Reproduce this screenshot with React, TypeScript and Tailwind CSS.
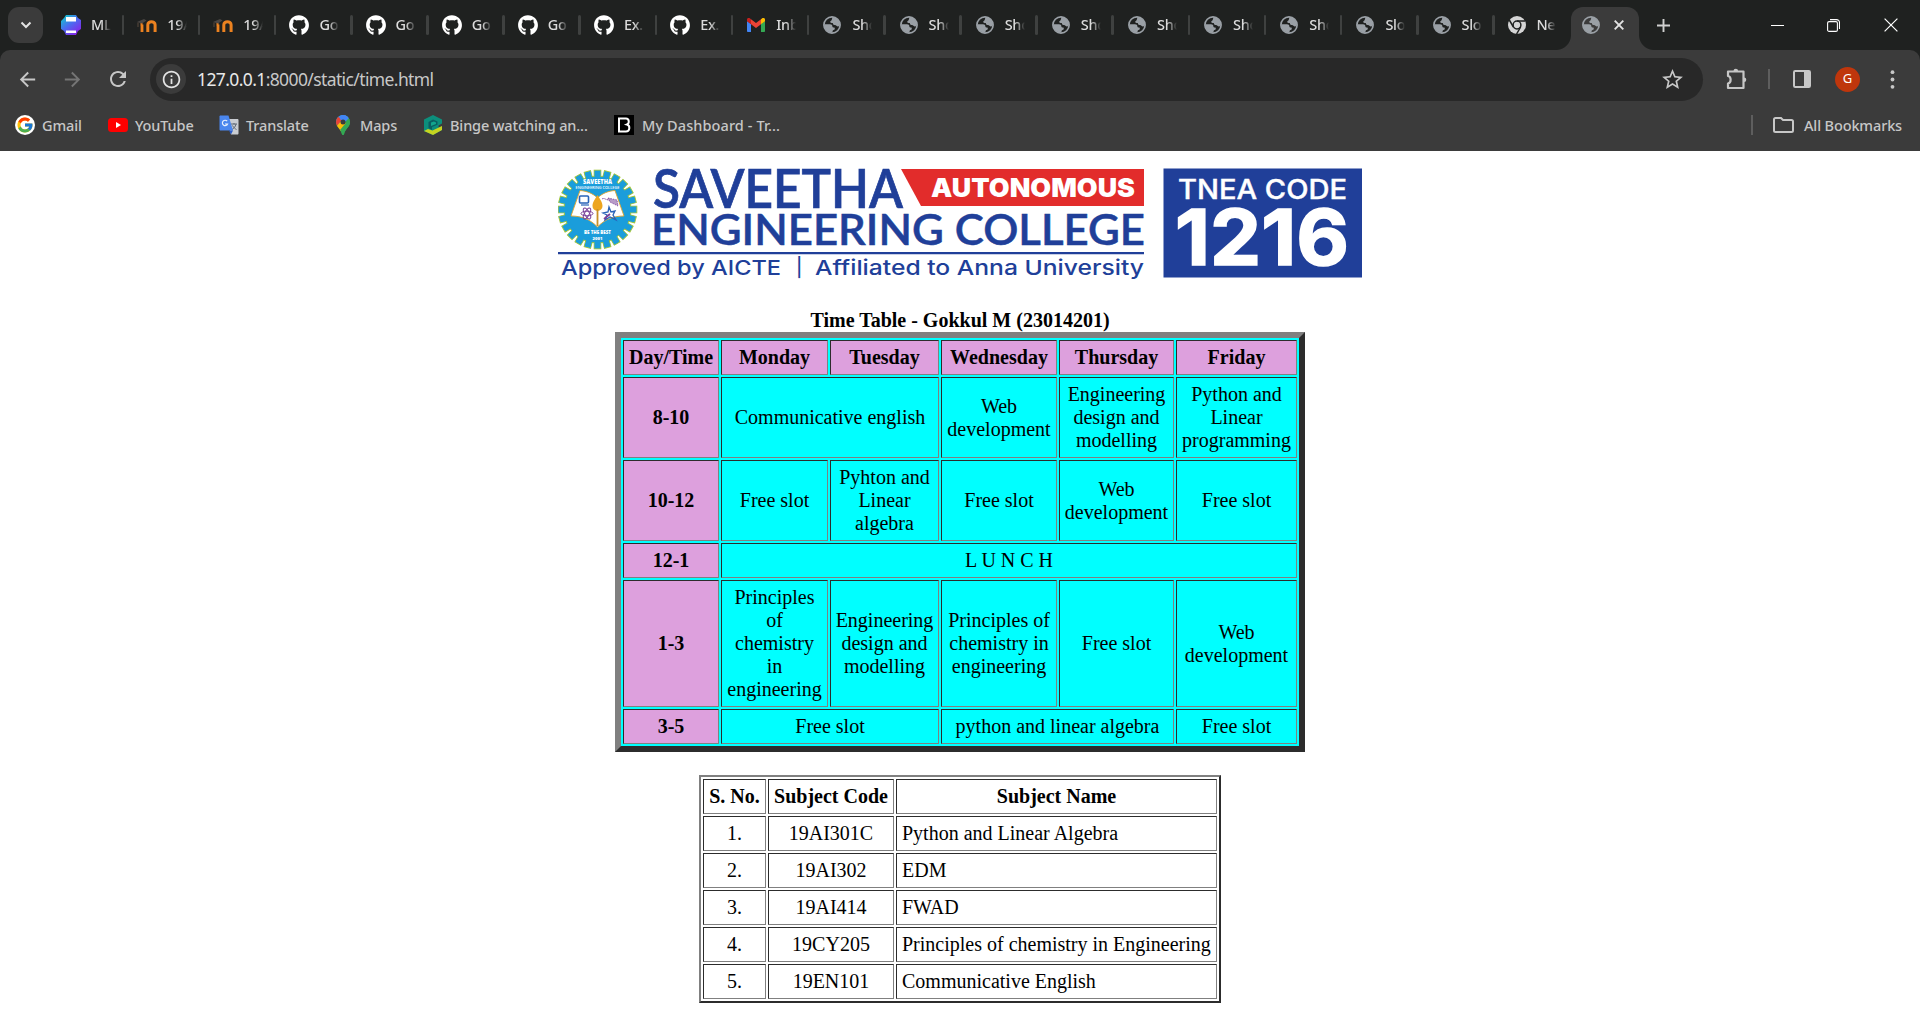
import React from "react";
import { FaGithub } from "react-icons/fa";
import { FcGoogle } from "react-icons/fc";
import { MdStarBorder, MdArrowBack, MdArrowForward, MdRefresh, MdInfoOutline } from "react-icons/md";

type IconKind = "ml" | "moodle" | "github" | "gmail" | "globe" | "chrome";

const tabs: { icon: IconKind; title: string }[] = [
  { icon: "ml", title: "ML" },
  { icon: "moodle", title: "19A" },
  { icon: "moodle", title: "19A" },
  { icon: "github", title: "Go" },
  { icon: "github", title: "Go" },
  { icon: "github", title: "Go" },
  { icon: "github", title: "Go" },
  { icon: "github", title: "Ex." },
  { icon: "github", title: "Ex." },
  { icon: "gmail", title: "Inb" },
  { icon: "globe", title: "Sho" },
  { icon: "globe", title: "Sho" },
  { icon: "globe", title: "Sho" },
  { icon: "globe", title: "Sho" },
  { icon: "globe", title: "Sho" },
  { icon: "globe", title: "Sho" },
  { icon: "globe", title: "Sho" },
  { icon: "globe", title: "Slo" },
  { icon: "globe", title: "Slo" },
];

function Globe() {
  return (
    <svg width="18" height="18" viewBox="0 0 18 18">
      <circle cx="9" cy="9" r="8.1" fill="none" stroke="#9aa0a6" strokeWidth="1.7" />
      <path d="M9.6 1C12 1 16.5 3.5 17 8.5c-.5 1.700-1.600 2.200-2.800 1.700-1.200-.6-1.400-1.400-2.800-1.300-1.300 0-1.500-.9-1.400-1.800-.9.2-2.600.1-2.800-1 0-1 1.200-1.300 1.500-2C9 3.300 9.200 2 9.600 1z" fill="#9aa0a6" />
      <path d="M1.200 8.300h5.800c1.500 0 2.400.8 2.400 2.200 0 .8.700 1.100 1.500 1.100.8 0 1.100.7.8 1.600-.4.8-1.700.8-2 1.600-.2.700-.2 1.300-.2 2C4.500 17 .8 13 1.200 8.300z" fill="#9aa0a6" />
    </svg>
  );
}

function TabIcon({ kind }: { kind: IconKind }) {
  switch (kind) {
    case "github":
      return <FaGithub size={20.5} color="#fff" />;
    case "globe":
      return <Globe />;
    case "gmail":
      return (
        <svg width="18" height="14" viewBox="0 0 18 14">
          <path d="M0 3v10.200c0 .5.400.8.800.8H4V6z" fill="#4285f4" />
          <path d="M18 3v10.200c0 .5-.4.8-.8.8H14V6z" fill="#34a853" />
          <path d="M14 1.200V6.200L18 3.200V1.600C18 .2 16.400-.6 15.200.300z" fill="#fbbc04" />
          <path d="M0 3.200l4 3V1.200L2.800.3C1.600-.6 0 .2 0 1.600z" fill="#c5221f" />
          <path d="M4 6.200v-5l5 3.800 5-3.800v5L9 10z" fill="#ea4335" />
        </svg>
      );
    case "chrome":
      return (
        <svg width="18" height="18" viewBox="0 0 18 18">
          <circle cx="9" cy="9" r="9" fill="#d5d5d5" />
          <circle cx="9" cy="9" r="3.900" fill="#d5d5d5" stroke="#1f2120" strokeWidth="1.500" />
          <path d="M9 4.900h8.200M5.400 11L1.300 4M12.600 11l-4 7" stroke="#1f2120" strokeWidth="1.500" fill="none" />
        </svg>
      );
    case "moodle":
      return (
        <svg width="20" height="13" viewBox="0 0 20 13">
          <path d="M5 13V5.500M5.500 5.500h-2" fill="none" stroke="#ec8220" strokeWidth="2.800" />
          <path d="M10.800 13V5.800c0-4.200 7.300-4.200 7.300 0V13" fill="none" stroke="#ec8220" strokeWidth="3" />
          <path d="M0 3L7 0l2.500 1.500L5 4.500z" fill="#4a4644" />
          <path d="M1 3.500v4.500" stroke="#5b4a3c" strokeWidth="1" />
        </svg>
      );
    case "ml":
      return (
        <svg width="20" height="20" viewBox="0 0 20 20">
          <defs>
            <linearGradient id="mlg" x1="0" y1="0" x2=".8" y2="1">
              <stop offset="0" stopColor="#08d6c4" />
              <stop offset=".5" stopColor="#4a6cf0" />
              <stop offset="1" stopColor="#8b1fe8" />
            </linearGradient>
          </defs>
          <path d="M5 0h10l2 3 3 2v9l-3 2-2 4H5l-2-4-3-2V6l3-3z" fill="url(#mlg)" />
          <path d="M5 2h10v4.500H5zM5 15.500h10V18H5z" fill="#fff" />
        </svg>
      );
  }
}

const titleClass =
  "w-[20px] overflow-hidden whitespace-nowrap text-[14.500px] tracking-[-0.3px] font-medium text-[#dcdcdc] [mask-image:linear-gradient(to_right,black_50%,transparent)]";

function Tab({ icon, title }: { icon: IconKind; title: string }) {
  return (
    <div className="flex h-[50px] w-[76.15px] shrink-0 items-center">
      <div className="ml-[13px] flex w-[20px] shrink-0 justify-center">
        <TabIcon kind={icon} />
      </div>
      <div className={`ml-[10px] ${titleClass}`}>{title}</div>
      <div className="ml-auto h-[20px] w-[2.500px] rounded-full bg-[#3f4140]" />
    </div>
  );
}

function TabStrip() {
  return (
    <div className="flex h-[50px] bg-[#1f2120]">
      <div className="mt-[7px] ml-[8px] flex h-[36px] w-[35px] items-center justify-center rounded-[11px] bg-[#3b3b3b]">
        <svg width="12" height="8" viewBox="0 0 12 8" fill="none" stroke="#e3e3e3" strokeWidth="2"><path d="M1.500 1.500L6 6l4.500-4.500" /></svg>
      </div>
      <div className="ml-[5px] flex">
        {tabs.map((t, i) => <Tab key={i} {...t} />)}
        <div className="flex h-[50px] w-[61.500px] items-center">
          <div className="ml-[12px] flex w-[20px] justify-center"><TabIcon kind="chrome" /></div>
          <div className={`ml-[10px] ${titleClass}`}>Ne</div>
        </div>
      </div>
      <div className="flex items-end">
        <div className="h-[15px] w-[15px] bg-[radial-gradient(circle_at_0_0,transparent_14.5px,#3b3b3b_15.5px)]" />
        <div className="flex h-[43px] w-[68px] items-center rounded-t-[12px] bg-[#3b3b3b] pb-[7px]">
          <div className="ml-[11px]"><Globe /></div>
          <svg className="ml-[14px]" width="10" height="10" viewBox="0 0 10 10" stroke="#e3e3e3" strokeWidth="1.900"><path d="M.7.7l8.600 8.600M9.300.7L.7 9.300" /></svg>
        </div>
        <div className="h-[15px] w-[15px] bg-[radial-gradient(circle_at_100%_0,transparent_14.5px,#3b3b3b_15.5px)]" />
      </div>
      <div className="flex h-[50px] flex-1 items-center">
        <svg className="ml-[3px]" width="13" height="13" viewBox="0 0 13 13" stroke="#d0d0d0" strokeWidth="1.900"><path d="M6.500 0v13M0 6.500h13" /></svg>
        <svg className="ml-auto" width="13" height="13" viewBox="0 0 13 13" stroke="#fff" strokeWidth="1"><path d="M0 6.500h13" /></svg>
        <svg className="ml-[43px]" width="13" height="13" viewBox="0 0 13 13" fill="none" stroke="#fff" strokeWidth="1.100"><rect x=".6" y="2.600" width="9.800" height="9.800" rx="1.500" /><path d="M3 .6h6.500a3 3 0 0 1 3 3V10" /></svg>
        <svg className="mr-[22px] ml-[44px]" width="14" height="14" viewBox="0 0 14 14" stroke="#fff" strokeWidth="1.200"><path d="M.6.6l12.800 12.800M13.400.6L.6 13.400" /></svg>
      </div>
    </div>
  );
}

function AddressRow() {
  return (
    <div className="flex h-[58px] items-center text-[#c7c7c7]">
      <MdArrowBack size={23} className="ml-[16px]" />
      <MdArrowForward size={23} className="ml-[22px] text-[#757575]" />
      <MdRefresh size={24} className="ml-[22px]" />
      <div className="ml-[20px] flex h-[43px] w-[1553px] items-center rounded-full bg-[#282828]">
        <div className="ml-[6px] flex h-[30px] w-[30px] items-center justify-center rounded-full bg-[#3b3b3b]">
          <MdInfoOutline size={21} color="#e3e3e3" />
        </div>
        <div className="ml-[11px] text-[17.500px] tracking-[-0.61px] whitespace-nowrap text-[#c7c7c7]">
          <span className="text-[#e8e8e8]">127.0.0.1</span>:8000/static/time.html
        </div>
        <MdStarBorder size={25} className="mr-[18px] ml-auto" />
      </div>
      <svg className="ml-[23px]" width="22" height="22" viewBox="0 0 22 22" fill="none" stroke="#c7c7c7" strokeWidth="2.200"><path d="M2 3.500h15.500V20H2v-4.500c3.500-.5 3.500-7 0-7.500z" strokeLinejoin="round" /><path d="M7.500 3a2.300 2.300 0 0 1 4.600 0zM18 9.500a2.300 2.300 0 0 1 0 4.600z" fill="#c7c7c7" stroke="none" /></svg>
      <div className="ml-[20px] h-[20px] w-[2px] bg-[#5e5e5e]" />
      <svg className="ml-[23px]" width="18" height="18" viewBox="0 0 18 18"><rect x="1" y="1" width="16" height="16" rx="1.200" fill="none" stroke="#c7c7c7" strokeWidth="2" /><path d="M11 1h6v16h-6z" fill="#c7c7c7" /></svg>
      <div className="ml-[24px] flex h-[25px] w-[25px] items-center justify-center rounded-full bg-[#bf360c] text-[13px] text-white">G</div>
      <svg className="ml-[30px]" width="5" height="19" viewBox="0 0 5 19" fill="#c7c7c7"><circle cx="2.500" cy="2.200" r="1.900" /><circle cx="2.500" cy="9.500" r="1.900" /><circle cx="2.500" cy="16.800" r="1.900" /></svg>
    </div>
  );
}

function BookmarksBar() {
  return (
    <div className="flex h-[34px] items-center text-[14.500px] font-medium tracking-[-0.13px] whitespace-nowrap text-[#c7c7c7]">
      <div className="ml-[15px] flex h-[20px] w-[20px] items-center justify-center rounded-full bg-white"><FcGoogle size={18} /></div>
      <div className="mt-[2px] ml-[7px] w-[66px]">Gmail</div>
      <svg width="20" height="14" viewBox="0 0 20 14"><rect width="20" height="14" rx="3.500" fill="#f00" /><path d="M8 4l5 3-5 3z" fill="#fff" /></svg>
      <div className="mt-[2px] ml-[7px] w-[84px]">YouTube</div>
      <svg width="20" height="20" viewBox="0 0 20 20">
        <path d="M8 4h10.500c.5 0 1 .5 1 1v13.500c0 .5-.5 1-1 1H12z" fill="#c9ccd1" />
        <path d="M12 9h6M15 8v1.500M17 9c-.5 3-2.500 4.500-4 5.500M13.500 10.500c1 2 2.500 3.200 4 4" stroke="#5f6875" strokeWidth="1" fill="none" />
        <path d="M1.500.5h8l4.500 15H1.500c-.5 0-1-.5-1-1v-13c0-.5.5-1 1-1z" fill="#4a86ee" />
        <path d="M10 15.500h4l-2 4z" fill="#2a5bc8" />
        <path d="M8.200 6.200A2.700 2.700 0 1 0 8.600 9H6" stroke="#e8f0fe" strokeWidth="1.200" fill="none" />
      </svg>
      <div className="mt-[2px] ml-[7px] w-[90px]">Translate</div>
      <svg width="14" height="20" viewBox="0 0 14 20">
        <defs><clipPath id="pin"><path d="M7 0a7 7 0 0 1 7 7c0 5-4.500 6-6 12.200-.3 1-1.700 1-2 0C4.500 13 0 12 0 7a7 7 0 0 1 7-7z" /></clipPath></defs>
        <g clipPath="url(#pin)"><path d="M0 0h14v20H0z" fill="#34a853" /><path d="M0 0h14L4 12 0 8z" fill="#4285f4" /><path d="M0 0l6 5-6 7z" fill="#ea4335" /><path d="M0 12L6 5l5 4-7 8z" fill="#fbbc04" /><path d="M5 0h9v2L8 8 4 4z" fill="#4285f4" /><path d="M14 3v17H5l-1-5 10-12z" fill="#34a853" /></g>
        <circle cx="7" cy="7" r="2.500" fill="#3b3b3b" />
      </svg>
      <div className="mt-[2px] ml-[10px] w-[64px]">Maps</div>
      <svg width="18" height="20" viewBox="0 0 18 20">
        <path d="M0 4.500L9 0l9 4.500V15l-9 5-9-4z" fill="#0c8f7c" />
        <path d="M4.500 7L9 4.500l4.500 2v3.300L8 12v3l-3.500-2z" fill="#0a5f62" />
        <path d="M7 7.500l3-1 2 1v1.500L7 11z" fill="#12a58d" />
        <path d="M14.500 10.500L18 8.500v3l-3.500 1z" fill="#3b3b3b" />
        <path d="M0 16l4-2 4.500 1.500L18 11v4l-9 5z" fill="#c6d420" />
      </svg>
      <div className="mt-[2px] ml-[8px] w-[164px]">Binge watching an...</div>
      <svg width="20" height="20" viewBox="0 0 20 20"><path d="M0 0h20v20H0z" /><path d="M5 3.500h7c3.500 0 3.500 5 1 6 3.500 1 3 7-1 7H5z" fill="none" stroke="#fff" strokeWidth="2" /></svg>
      <div className="mt-[2px] ml-[8px] tracking-[0.1px]">My Dashboard - Tr...</div>
      <div className="ml-auto h-[20px] w-[2px] bg-[#5e5e5e]" />
      <svg className="ml-[20px]" width="21" height="16" viewBox="0 0 21 16" fill="none" stroke="#c7c7c7" strokeWidth="2"><path d="M1 2.500C1 1.500 1.500 1 2.500 1H8l2 2h8.500c1 0 1.500.5 1.500 1.500v9c0 1-.5 1.500-1.500 1.500h-16C1.500 15 1 14.500 1 13.500z" /></svg>
      <div className="mt-[2px] mr-[17px] ml-[10px] w-[99px]">All Bookmarks</div>
    </div>
  );
}

/* College crest: a toothed wheel with an open book inside. */
function Crest() {
  const teeth = Array.from({ length: 24 }, (_, i) => i * 15);
  return (
    <g>
      {teeth.map((a) => (
        <rect key={a} x="-3.300" y="-39.300" width="6.600" height="9" fill="#1b9ddb" stroke="#a4c639" strokeWidth="1" transform={`translate(39.500 41.500) rotate(${a})`} />
      ))}
      <circle cx="39.500" cy="41.500" r="33.500" fill="#1b9ddb" stroke="#a4c639" strokeWidth=".9" />
      {teeth.map((a) => (
        <rect key={a} x="-2.900" y="-38.700" width="5.800" height="9" fill="#1b9ddb" transform={`translate(39.500 41.500) rotate(${a})`} />
      ))}
      <path d="M22 22.500c7 .5 13 3 17.500 7.500C44 25.500 50 23 57 22.500L66 48c-10 0-19 3-26.500 11C32 51 23 48 13 48z" fill="#fff" stroke="#e0a52c" strokeWidth=".9" />
      <path d="M39.500 27c3 5 5 7.500 5 11a5 5 0 0 1-10 0c0-3.500 2-6 5-11z" fill="#eda51f" />
      <path d="M39.500 41v17" stroke="#c99025" strokeWidth="1.800" />
      <rect x="21.500" y="28" width="9" height="7" rx="1" fill="none" stroke="#2a63b8" strokeWidth="1.600" />
      <path d="M23 37h8" stroke="#2a63b8" strokeWidth="1.200" />
      <g fill="none" stroke="#7a3f98" strokeWidth="1">
        <ellipse cx="29" cy="45.500" rx="6" ry="2.300" />
        <ellipse cx="29" cy="45.500" rx="6" ry="2.300" transform="rotate(60 29 45.500)" />
        <ellipse cx="29" cy="45.500" rx="6" ry="2.300" transform="rotate(120 29 45.500)" />
      </g>
      <path d="M44 31c3-2 5 3 9 0M50 30l9 2 1 6-8-4z" fill="#b79cc8" stroke="#7a3f98" strokeWidth=".8" strokeDasharray="1.500 1" />
      <path d="M51 39l2 5 4-1-2 4 3 5-6-3-5 3 2-5-4-2 5-1z" fill="none" stroke="#2a63b8" strokeWidth="1.300" />
      <path d="M46 51l6-5" stroke="#7a3f98" strokeWidth="1.800" />
      <g fill="#fff" fontFamily="'Open Sans', sans-serif" fontWeight="800" textAnchor="middle">
        <text x="39.500" y="15.500" fontSize="6" textLength="29" lengthAdjust="spacingAndGlyphs">SAVEETHA</text>
        <text x="39.500" y="21.300" fontSize="4" fontWeight="600" textLength="44" lengthAdjust="spacingAndGlyphs">ENGINEERING COLLEGE</text>
        <text x="39.500" y="66.300" fontSize="4.800" textLength="27" lengthAdjust="spacingAndGlyphs">BE THE BEST</text>
        <text x="39.500" y="71.500" fontSize="4.200">2001</text>
      </g>
    </g>
  );
}

function Banner() {
  return (
    <svg className="block" width="804" height="115" viewBox="0 0 804 115">
      <Crest />
      <g fill="#203f99" fontFamily="Lato, sans-serif" fontWeight="600">
        <text x="95" y="39.700" fontSize="53" stroke="#203f99" strokeWidth=".7" textLength="250" lengthAdjust="spacingAndGlyphs">SAVEETHA</text>
        <text x="93" y="77" fontSize="43" stroke="#203f99" strokeWidth=".5" textLength="494" lengthAdjust="spacingAndGlyphs">ENGINEERING COLLEGE</text>
      </g>
      <path d="M343 1h243v37H363z" fill="#e22c2b" />
      <text x="373" y="28.700" fill="#fff" fontFamily="Inter, sans-serif" fontWeight="900" fontSize="25.500" textLength="204" lengthAdjust="spacingAndGlyphs">AUTONOMOUS</text>
      <path d="M0 84h586v2.200H0z" fill="#203f99" />
      <g fill="#203f99" fontFamily="Inter, sans-serif" fontWeight="500" fontSize="20.500">
        <text x="3" y="106.700" textLength="220" lengthAdjust="spacingAndGlyphs">Approved by AICTE</text>
        <text x="238" y="105.500" fontSize="18.500">|</text>
        <text x="257" y="106.700" textLength="329" lengthAdjust="spacingAndGlyphs">Affiliated to Anna University</text>
      </g>
      <path d="M605.500 .5h198.500v109H605.500z" fill="#203f99" />
      <text x="620" y="30.700" fill="#fff" stroke="#fff" strokeWidth=".4" fontFamily="Inter, sans-serif" fontWeight="500" fontSize="27" textLength="169" lengthAdjust="spacingAndGlyphs">TNEA CODE</text>
      <text x="617" y="97.200" fill="#fff" stroke="#fff" strokeWidth="1.600" fontFamily="Inter, sans-serif" fontWeight="700" fontSize="77.500" textLength="174" lengthAdjust="spacingAndGlyphs">1216</text>
    </svg>
  );
}

type CellData = { text: string; head?: boolean; span?: string };

const timetable: CellData[] = [
  { text: "Day/Time", head: true },
  { text: "Monday", head: true },
  { text: "Tuesday", head: true },
  { text: "Wednesday", head: true },
  { text: "Thursday", head: true },
  { text: "Friday", head: true },
  { text: "8-10", head: true },
  { text: "Communicative english", span: "col-span-2" },
  { text: "Web\ndevelopment" },
  { text: "Engineering\ndesign and\nmodelling" },
  { text: "Python and\nLinear\nprogramming" },
  { text: "10-12", head: true },
  { text: "Free slot" },
  { text: "Pyhton and\nLinear\nalgebra" },
  { text: "Free slot" },
  { text: "Web\ndevelopment" },
  { text: "Free slot" },
  { text: "12-1", head: true },
  { text: "L U N C H", span: "col-span-5" },
  { text: "1-3", head: true },
  { text: "Principles\nof\nchemistry\nin\nengineering" },
  { text: "Engineering\ndesign and\nmodelling" },
  { text: "Principles of\nchemistry in\nengineering" },
  { text: "Free slot" },
  { text: "Web\ndevelopment" },
  { text: "3-5", head: true },
  { text: "Free slot", span: "col-span-2" },
  { text: "python and linear algebra", span: "col-span-2" },
  { text: "Free slot" },
];

const insetBorder = "border border-t-[#2c2c2c] border-l-[#2c2c2c] border-r-[#808080] border-b-[#808080]";
const outsetBorder = "border-t-[#808080] border-l-[#808080] border-r-[#2c2c2c] border-b-[#2c2c2c]";

function TimeTable() {
  return (
    <div className={`grid w-[690px] grid-cols-[96px_107px_109px_116px_115px_121px] gap-[2px] border-[6px] bg-[#00ffff] p-[2px] ${outsetBorder}`}>
      {timetable.map((c, i) => (
        <div key={i} className={`flex items-center justify-center py-[5px] text-center whitespace-pre ${insetBorder} ${c.head ? "bg-[#dda0dd] font-bold" : ""} ${c.span ?? ""}`}>
          {c.text}
        </div>
      ))}
    </div>
  );
}

const subjects = [
  ["1.", "19AI301C", "Python and Linear Algebra"],
  ["2.", "19AI302", "EDM"],
  ["3.", "19AI414", "FWAD"],
  ["4.", "19CY205", "Principles of chemistry in Engineering"],
  ["5.", "19EN101", "Communicative English"],
];

function SubjectTable() {
  return (
    <div className={`mt-[23px] grid w-[522px] grid-cols-[63px_126px_321px] gap-[2px] border-2 p-[2px] ${outsetBorder}`}>
      {["S. No.", "Subject Code", "Subject Name"].map((h) => (
        <div key={h} className={`py-[5px] text-center font-bold whitespace-nowrap ${insetBorder}`}>{h}</div>
      ))}
      {subjects.map(([no, code, name]) => (
        <React.Fragment key={no}>
          <div className={`py-[5px] text-center ${insetBorder}`}>{no}</div>
          <div className={`py-[5px] text-center ${insetBorder}`}>{code}</div>
          <div className={`px-[5px] py-[5px] whitespace-nowrap ${insetBorder}`}>{name}</div>
        </React.Fragment>
      ))}
    </div>
  );
}

export default function App() {
  return (
    <div className="h-[1030px] w-[1920px] overflow-hidden bg-white">
      <div className="h-[151px] bg-[#1f2120] font-['Noto_Sans','Open_Sans',sans-serif]">
        <TabStrip />
        <div className="h-[101px] rounded-t-[10px] bg-[#3b3b3b]">
          <AddressRow />
          <BookmarksBar />
        </div>
      </div>
      <div className="flex flex-col items-center pt-[17px] font-['Liberation_Serif','Times_New_Roman',serif] text-[20px] leading-[23px] text-black">
        <Banner />
        <div className="mt-[26px] font-bold">Time Table - Gokkul M (23014201)</div>
        <TimeTable />
        <SubjectTable />
      </div>
    </div>
  );
}
